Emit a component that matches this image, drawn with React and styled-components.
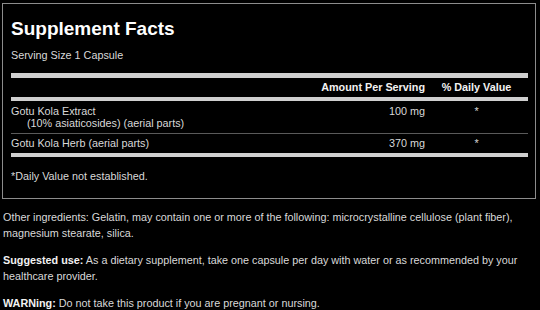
import styled, { createGlobalStyle } from "styled-components"

const GlobalStyle = createGlobalStyle`
  html, body {
    margin: 0;
    padding: 0;
    background: #000;
  }
  body {
    font-family: "Liberation Sans", Arial, sans-serif;
    font-size: 10.8px;
    color: #d9d9d9;
  }
`;

const Page = styled.div`
  width: 540px;
  height: 310px;
  overflow: hidden;
  padding: 3px 4px 0 2px;
  box-sizing: border-box;
`;

const FactsBox = styled.section`
  border: 1px solid #8c8c8c;
  padding: 0 7px 0 8px;
`;

const Title = styled.h2`
  margin: 14px 0 0;
  font-size: 19px;
  line-height: 22px;
  font-weight: bold;
  color: #fff;
`;

const Serving = styled.div`
  margin: 8px 0 11px;
  line-height: 14px;
`;

const Bar = styled.div`
  height: ${(p) => p.$h || 5}px;
  background: #cfcfcf;
`;

const Row = styled.div`
  display: grid;
  grid-template-columns: 1fr 110px 93px;
  padding: ${(p) => p.$pad || "3px 5px 3px 0"};
  line-height: ${(p) => p.$lh || 13}px;
  border-bottom: ${(p) => (p.$rule ? "1px solid #5a5a5a" : "none")};
`;

const HeadCell = styled.div`
  font-weight: bold;
  color: #f2f2f2;
  text-align: ${(p) => p.$align || "left"};
  padding-right: ${(p) => (p.$align === "right" ? 5 : 0)}px;
`;

const NameCell = styled.div`
  & > span {
    display: block;
    padding-left: 16px;
  }
`;

const AmountCell = styled.div`
  text-align: right;
  padding-right: 5px;
`;

const DvCell = styled.div`
  text-align: center;
`;

const Footnote = styled.div`
  padding: 13px 0 15px;
  line-height: 13px;
`;

const Notes = styled.div`
  padding: 10px 0 0 1px;
  line-height: 16px;
`;

const Para = styled.p`
  margin: 0 0 11px;

  & > b {
    color: #f2f2f2;
  }
`;

const ingredients = [
  { name: "Gotu Kola Extract", sub: "(10% asiaticosides) (aerial parts)", amount: "100 mg" },
  { name: "Gotu Kola Herb (aerial parts)", amount: "370 mg" },
];

export default function App() {
  return (
    <Page>
      <GlobalStyle />
      <FactsBox>
        <Title>Supplement Facts</Title>
        <Serving>Serving Size 1 Capsule</Serving>
        <Bar $h={5} />
        <Row>
          <div />
          <HeadCell $align="right">Amount Per Serving</HeadCell>
          <HeadCell $align="center">% Daily Value</HeadCell>
        </Row>
        <Bar $h={4} />
        {ingredients.map((it, i) => (
          <Row
            key={it.name}
            $rule={i < ingredients.length - 1}
            $pad={it.sub ? "4px 5px 4px 0" : "3px 5px 3px 0"}
            $lh={it.sub ? 12 : 13}
          >
            <NameCell>
              {it.name}
              {it.sub && <span>{it.sub}</span>}
            </NameCell>
            <AmountCell>{it.amount}</AmountCell>
            <DvCell>*</DvCell>
          </Row>
        ))}
        <Bar $h={4} />
        <Footnote>*Daily Value not established.</Footnote>
      </FactsBox>
      <Notes>
        <Para>
          Other ingredients: Gelatin, may contain one or more of the following: microcrystalline
          cellulose (plant fiber), magnesium stearate, silica.
        </Para>
        <Para>
          <b>Suggested use:</b> As a dietary supplement, take one capsule per day with water or as
          recommended by your healthcare provider.
        </Para>
        <Para>
          <b>WARNing:</b> Do not take this product if you are pregnant or nursing.
        </Para>
      </Notes>
    </Page>
  )
}
